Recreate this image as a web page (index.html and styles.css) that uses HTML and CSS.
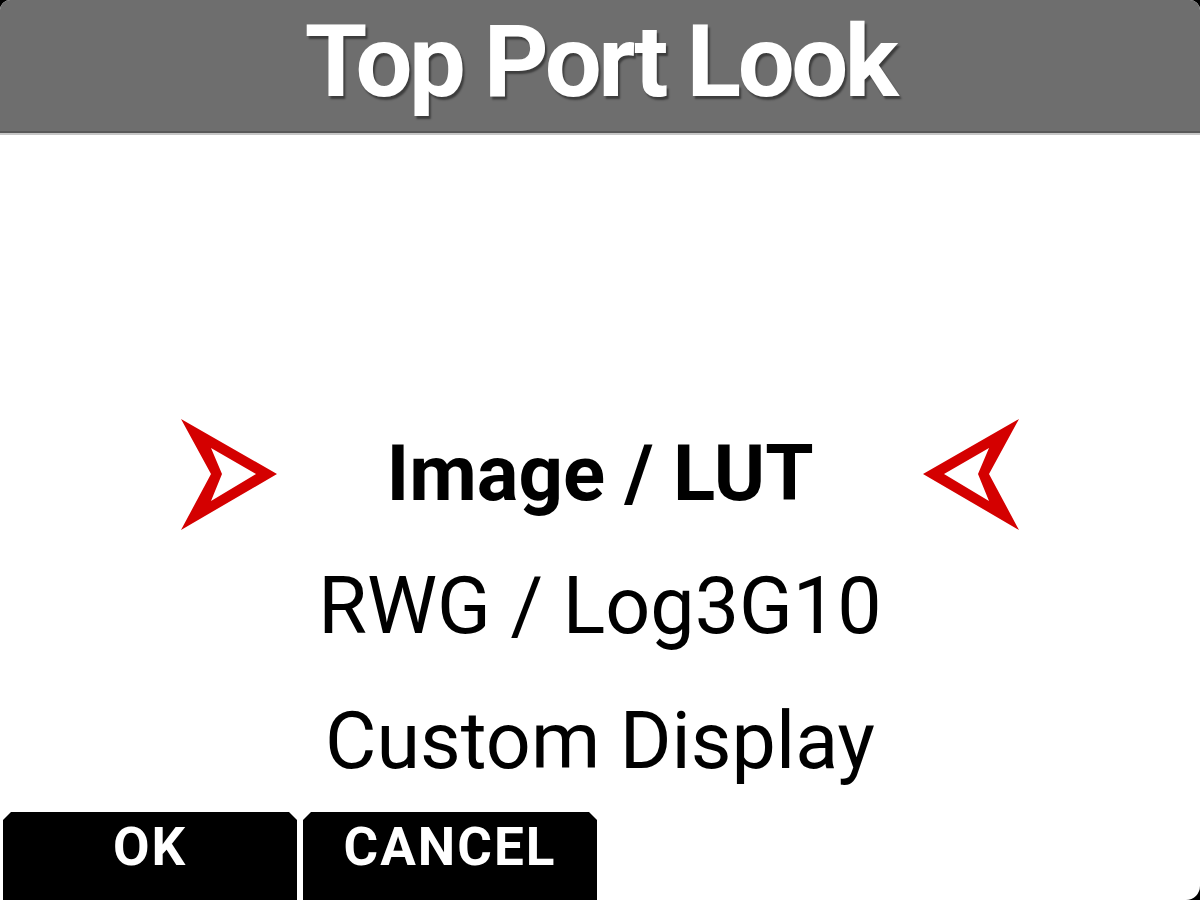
FILE: index.html
```html
<!DOCTYPE html>
<html lang="en">
<head>
  <meta charset="UTF-8" />
  <title>Top Port Look</title>
  <link rel="stylesheet" href="styles.css">
</head>
<body>
  <div class="screen">
    <div class="title-bar">Top Port Look</div>

    <div class="menu">
      <div class="menu-item selected">
        <svg class="arrow" width="100" height="114" viewBox="0 0 100 114">
          <path fill="#d40000" fill-rule="evenodd"
            d="M1 1 L97 56 L1 112 L31 56 Z M31 30 L76 56 L31 83 L42 56 Z" />
        </svg>
        <span class="label">Image / LUT</span>
        <svg class="arrow flip" width="100" height="114" viewBox="0 0 100 114">
          <path fill="#d40000" fill-rule="evenodd"
            d="M1 1 L97 56 L1 112 L31 56 Z M31 30 L76 56 L31 83 L42 56 Z" />
        </svg>
      </div>
      <div class="menu-item">RWG / Log3G10</div>
      <div class="menu-item">Custom Display</div>
    </div>

    <div class="buttons">
      <div class="soft-key">OK</div>
      <div class="soft-key">CANCEL</div>
    </div>
  </div>
</body>
</html>
```

FILE: styles.css
```css
html, body {
  margin: 0;
  background: #000;
}

.screen {
  width: 1200px;
  height: 900px;
  background: #fff;
  border-radius: 10px 10px 14px 0;
  overflow: hidden;
  display: flex;
  flex-direction: column;
  font-family: Roboto, 'Liberation Sans', sans-serif;
  color: #000;
}

.title-bar {
  height: 131px;
  line-height: 124px;
  background: #6e6e6e;
  border-bottom: 2px solid #585858;
  box-shadow: 0 2px 0 #c6c6c6;
  color: #fff;
  font-size: 101px;
  font-weight: 700;
  text-align: center;
  letter-spacing: -3.5px;
  text-shadow: 2px 3px 2px rgba(0, 0, 0, 0.45);
}

.menu {
  flex: 1;
  display: flex;
  flex-direction: column;
  justify-content: flex-end;
  padding-bottom: 3px;
}

.menu-item {
  height: 135px;
  line-height: 135px;
  font-size: 79px;
  text-align: center;
}

.menu-item.selected {
  display: flex;
  align-items: center;
  justify-content: center;
  font-weight: 700;
  font-size: 78px;
  height: 132px;
}

.label {
  width: 640px;
}

.arrow {
  display: block;
  margin-top: 4px;
}

.arrow.flip {
  transform: scaleX(-1);
}

.buttons {
  display: flex;
  gap: 6px;
  padding-left: 3px;
  height: 88px;
}

.soft-key {
  width: 294px;
  background: #000;
  color: #fff;
  font-size: 53px;
  font-weight: 700;
  line-height: 70px;
  letter-spacing: 2px;
  text-align: center;
  clip-path: polygon(8px 0, calc(100% - 8px) 0, 100% 8px, 100% 100%, 0 100%, 0 8px);
}
```
